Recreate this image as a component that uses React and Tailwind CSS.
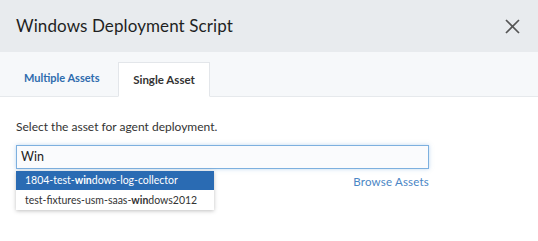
const options = [
  { pre: '1804-test-', hit: 'win', post: 'dows-log-collector' },
  { pre: 'test-fixtures-usm-saas-', hit: 'win', post: 'dows2012' },
];

export default function App() {
  return (
    <div className="w-[538px] h-[241px] bg-white overflow-hidden font-['Lato',sans-serif] text-[#222]">
      <div className="h-[52px] bg-[#e8ebee] flex items-center justify-between pl-4 pr-[18px]">
        <h1 className="text-[17px] text-[#1f1f1f] tracking-[0.1px]">Windows Deployment Script</h1>
        <svg width="15" height="15" viewBox="0 0 15 15" className="text-[#555]">
          <path d="M1 1L14 14M14 1L1 14" stroke="currentColor" strokeWidth="1.7" fill="none" />
        </svg>
      </div>

      <div className="h-[45px] bg-[#f6f8fa] border-b border-[#e6e9ec] flex items-end pl-[16px]">
        <button className="h-[35px] text-[11px] font-bold text-[#2e6cae] mr-[2px] w-[100px] text-left pl-[8px]">
          Multiple Assets
        </button>
        <button className="h-[35px] w-[92px] -mb-px bg-white border border-[#e3e6ea] border-b-white text-[11.5px] font-bold text-[#333]">
          Single Asset
        </button>
      </div>

      <div className="px-4 pt-[21px]">
        <p className="text-[12px] text-[#333]">Select the asset for agent deployment.</p>
        <div className="relative w-[413px] mt-[9px]">
          <div className="h-[24px] border border-[#7db0df] bg-[#fafbfd] shadow-[0_0_4px_rgba(125,176,223,0.5)] flex items-center px-[4px] text-[12.5px] text-[#222]">
            Win
          </div>
          <div className="flex justify-end pt-[4px]">
            <span className="text-[11.5px] text-[#4a86c5] tracking-[0.2px]">Browse Assets</span>
          </div>
          <div className="absolute left-0 top-[26px] w-[198px] bg-white shadow-[0_1px_4px_rgba(0,0,0,0.25)]">
            {options.map((o, i) => (
              <div
                key={i}
                className={
                  i === 0
                    ? 'h-[19px] leading-[19px] pl-[9px] text-[10.5px] whitespace-nowrap bg-[#2a6bb3] text-white'
                    : 'h-[20px] leading-[20px] pl-[9px] text-[10.5px] whitespace-nowrap text-[#333]'
                }
              >
                <span>{o.pre}</span>
                <b>{o.hit}</b>
                <span>{o.post}</span>
              </div>
            ))}
          </div>
        </div>
      </div>
    </div>
  );
}
